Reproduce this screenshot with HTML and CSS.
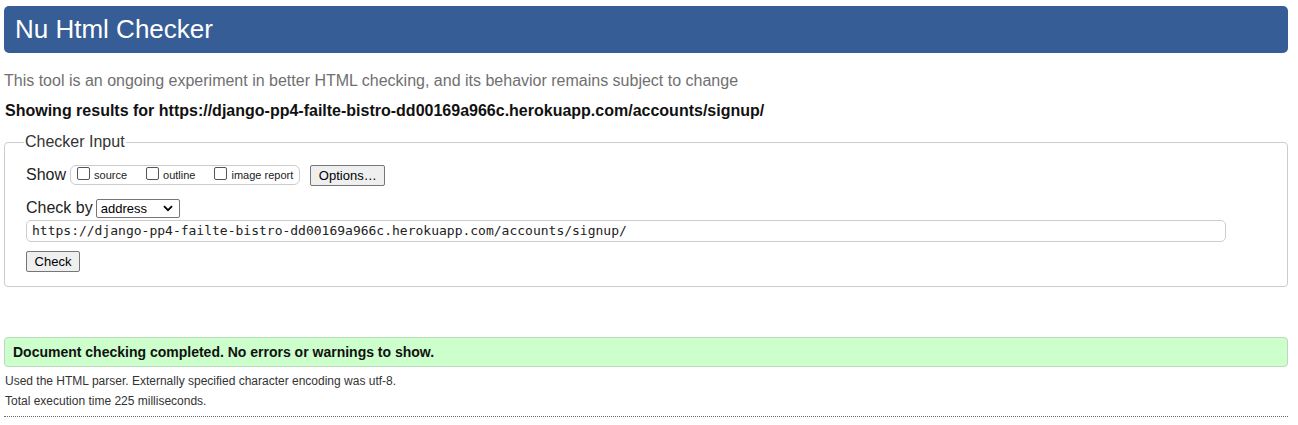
FILE: index.html
```html
<!DOCTYPE html>
<html>
<head>
<meta charset="utf-8">
<link rel="stylesheet" href="styles.css">
</head>
<body>
<h1 class="title">Nu Html Checker</h1>
<p class="tagline">This tool is an ongoing experiment in better HTML checking, and its behavior remains subject to change</p>
<p class="results-for">Showing results for https://django-pp4-failte-bistro-dd00169a966c.herokuapp.com/accounts/signup/</p>
<fieldset class="input-box">
  <legend>Checker Input</legend>
  <div class="row show-row">
    <span class="label">Show</span>
    <span class="checks">
      <label class="chk"><span class="box"></span>source</label>
      <label class="chk"><span class="box"></span>outline</label>
      <label class="chk"><span class="box"></span>image report</label>
    </span>
    <button class="btn options">Options…</button>
  </div>
  <div class="row by-row">
    <span class="label">Check by</span>
    <span class="select">address<svg width="10" height="7" viewBox="0 0 10 7"><path d="M1 1.2 L5 5.2 L9 1.2" fill="none" stroke="#000" stroke-width="1.8"/></svg></span>
  </div>
  <div class="url">https://django-pp4-failte-bistro-dd00169a966c.herokuapp.com/accounts/signup/</div>
  <div class="row"><button class="btn check">Check</button></div>
</fieldset>
<div class="success">Document checking completed. No errors or warnings to show.</div>
<p class="meta">Used the HTML parser. Externally specified character encoding was utf-8.</p>
<p class="meta">Total execution time 225 milliseconds.</p>
<hr class="dots">
</body>
</html>
```
FILE: styles.css
```css
html, body { margin: 0; padding: 0; background: #fff; }
body {
  padding: 6px 10px 0 4px;
  font-family: "Liberation Sans", Arial, sans-serif;
  color: #222;
}
.title {
  margin: 0;
  height: 47px;
  box-sizing: border-box;
  background: #365d95;
  color: #fff;
  font-weight: normal;
  font-size: 26px;
  line-height: 47px;
  padding-left: 11px;
  border-radius: 5px;
}
.tagline {
  margin: 18px 0 0 0;
  font-size: 16px;
  line-height: 20px;
  color: #707070;
}
.results-for {
  margin: 10px 0 0 1px;
  font-size: 16px;
  line-height: 20px;
  font-weight: bold;
  color: #111;
}
.input-box {
  margin: 12px 0 0 0;
  padding: 13px 21px 14px 21px;
  border: 1px solid #ccc;
  border-radius: 4px;
  height: 154px;
  box-sizing: border-box;
}
.input-box legend {
  font-size: 16px;
  color: #333;
  padding: 0 1px;
  margin-left: -2px;
}
.row { display: flex; align-items: center; }
.label { font-size: 16px; color: #222; white-space: nowrap; }
.show-row { height: 22px; margin-top: 0; }
.checks {
  margin-left: 4px;
  display: flex;
  flex: none;
  align-items: center;
  border: 1px solid #ccc;
  border-radius: 6px;
  height: 18px;
  padding: 0 6px 0 6px;
  white-space: nowrap;
}
.chk {
  display: flex;
  flex: none;
  align-items: center;
  font-size: 11px;
  color: #222;
  margin-right: 19px;
  white-space: nowrap;
}
.chk:last-child { margin-right: 0; }
.box {
  flex: none;
  width: 11px; height: 11px;
  border: 1px solid #555;
  border-radius: 2px;
  margin-right: 4px;
  margin-top: -3px;
  background: #fff;
}
.btn {
  font-family: "Liberation Sans", Arial, sans-serif;
  font-size: 13px;
  color: #000;
  background: #efefef;
  border: 1px solid #767676;
  border-radius: 2px;
  padding: 0 6px;
  height: 21px;
  white-space: nowrap;
}
.options { margin-left: 10px; width: 75px; flex: none; }
.by-row { margin-top: 12px; height: 20px; }
.select {
  margin-left: 3px;
  display: flex;
  align-items: center;
  justify-content: space-between;
  width: 84px;
  height: 19px;
  box-sizing: border-box;
  border: 1px solid #767676;
  border-radius: 2px;
  font-size: 13px;
  padding: 0 6px 0 4px;
  color: #000;
}
.url {
  margin-top: 2px;
  width: 1200px;
  height: 22px;
  box-sizing: border-box;
  border: 1px solid #ccc;
  border-radius: 5px;
  font-family: "DejaVu Sans Mono", "Liberation Mono", monospace;
  font-size: 13px;
  line-height: 20px;
  padding-left: 5px;
  color: #222;
}
.check { margin-top: 9px; width: 54px; height: 21px; font-size: 13px; }
.success {
  margin-top: 50px;
  height: 30px;
  box-sizing: border-box;
  background: #ccffcc;
  border: 1px solid #bbd9bb;
  border-radius: 4px;
  font-size: 14px;
  font-weight: bold;
  line-height: 28px;
  padding-left: 8px;
  color: #111;
}
.meta {
  margin: 7px 0 0 1px;
  font-size: 12px;
  line-height: 14px;
  color: #333;
}
.meta + .meta { margin-top: 6px; }
.dots {
  margin: 8px 0 0 0;
  border: 0;
  border-top: 1px dotted #666;
  height: 0;
}
```
